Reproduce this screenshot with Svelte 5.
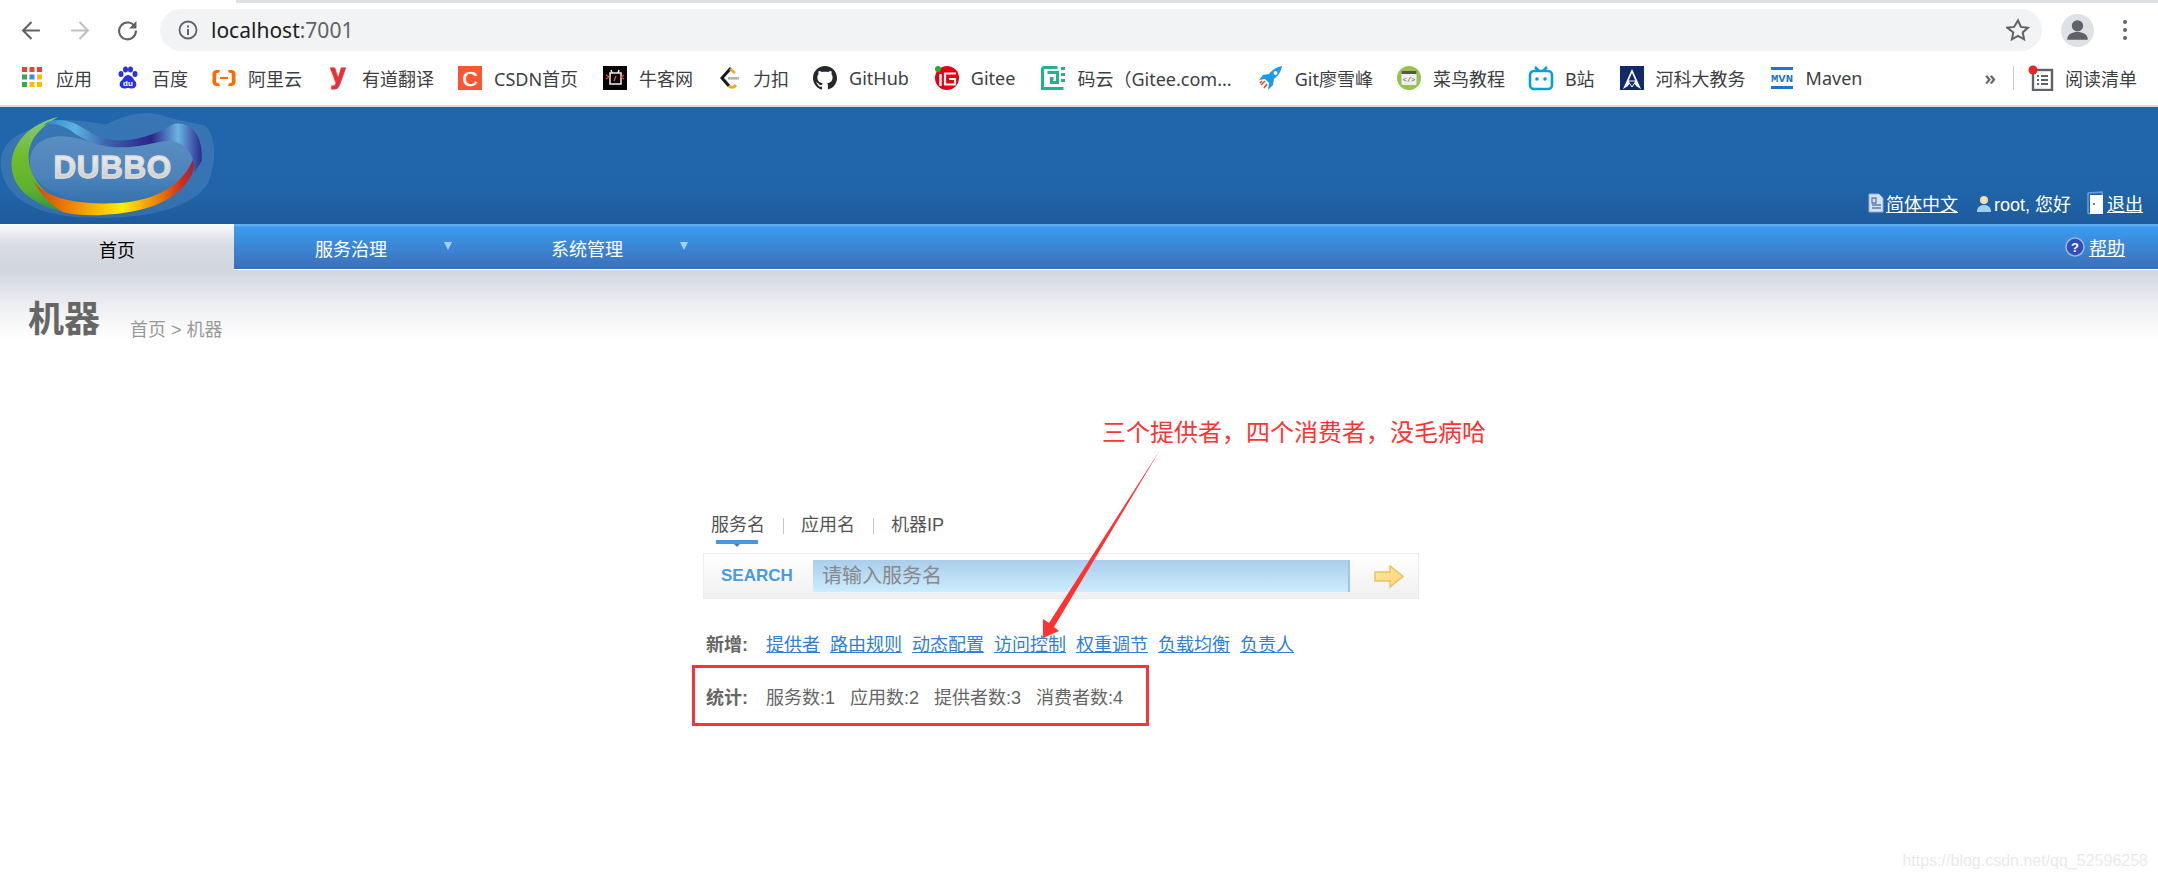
<script>
  const bookmarks = [
    { label: "应用", icon: "apps", gap: 24 },
    { label: "百度", icon: "baidu", gap: 24 },
    { label: "阿里云", icon: "ali", gap: 24 },
    { label: "有道翻译", icon: "youdao", gap: 24 },
    { label: "CSDN首页", icon: "csdn", gap: 25 },
    { label: "牛客网", icon: "nowcoder", gap: 24 },
    { label: "力扣", icon: "leetcode", gap: 24 },
    { label: "GitHub", icon: "github", gap: 26 },
    { label: "Gitee", icon: "gitee", gap: 26 },
    { label: "码云（Gitee.com...", icon: "mayun", gap: 27 },
    { label: "Git廖雪峰", icon: "rocket", gap: 24 },
    { label: "菜鸟教程", icon: "runoob", gap: 24 },
    { label: "B站", icon: "bili", gap: 25 },
    { label: "河科大教务", icon: "haust", gap: 24 },
    { label: "Maven", icon: "maven", gap: 0 },
  ];

  const icons = {
    apps: `<g fill="#ea4335"><rect x="2" y="1" width="5" height="5"/><rect x="9.500" y="1" width="5" height="5"/><rect x="17" y="1" width="5" height="5"/></g><rect x="2" y="8.500" width="5" height="5" fill="#34a853"/><rect x="9.500" y="8.500" width="5" height="5" fill="#4285f4"/><rect x="17" y="8.500" width="5" height="5" fill="#fbbc05"/><rect x="2" y="16" width="5" height="5" fill="#34a853"/><rect x="9.500" y="16" width="5" height="5" fill="#fbbc05"/><rect x="17" y="16" width="5" height="5" fill="#fbbc05"/>`,
    baidu: `<g fill="#2932e1"><ellipse cx="5" cy="8" rx="2.500" ry="3"/><ellipse cx="9.500" cy="3.500" rx="2.500" ry="3"/><ellipse cx="14.500" cy="3.500" rx="2.500" ry="3"/><ellipse cx="19" cy="8" rx="2.500" ry="3"/><path d="M12 9C8.500 9 7.500 13 5 15 2.500 17.500 3.500 22.500 8.500 22.500c1.500 0 2.500-.5 3.500-.5s2 .5 4 .5c4.500 0 5.500-5 3-7.500C17.500 13 15.500 9 12 9z"/></g><text x="12" y="20" font-size="8" font-weight="700" fill="#fff" text-anchor="middle" font-family="Liberation Sans">du</text>`,
    ali: `<path d="M8 4H4.500C2.500 4 .5 5.500.5 8v8c0 2.500 2 4 4 4H8l-.8-2.400-3-.8V7.200l3-.8zM16 4h3.500c2 0 4 1.500 4 4v8c0 2.500-2 4-4 4H16l.8-2.400 3-.8V7.200l-3-.8z" fill="#ff6a00"/><rect x="8" y="11" width="8" height="2" fill="#ff6a00"/>`,
    youdao: `<text x="12" y="17" font-size="27" font-weight="700" fill="#e8303a" stroke="#e8303a" stroke-width="1.200" text-anchor="middle" font-family="Liberation Sans">y</text>`,
    csdn: `<rect width="24" height="24" fill="#fc5531"/><text x="12" y="19.500" font-size="21" fill="#fff" stroke="#fff" stroke-width=".6" text-anchor="middle" font-family="Liberation Sans">C</text>`,
    nowcoder: `<rect width="24" height="24" fill="#050505"/><rect x="7" y="7" width="11" height="11" fill="none" stroke="#eee" stroke-width="1.500"/><path d="M8 4l1 3M16 4l-1 3" stroke="#eee" stroke-width="1.500"/><path d="M3 9l3 2-3 2M21 9l-3 2 3 2M11 15l2-5" stroke="#e8562a" stroke-width="1.300" fill="none"/>`,
    leetcode: `<path d="M14 2L5 12l7 8" fill="none" stroke="#1a1a1a" stroke-width="3"/><path d="M13 3l5 4" stroke="#f5a623" stroke-width="2.600"/><path d="M12 20c2.500 2 5 1.500 7-1" fill="none" stroke="#f5a623" stroke-width="3"/><rect x="11" y="11" width="11" height="2.600" fill="#b3b3b3"/>`,
    github: `<path fill="#24292e" d="M12 0C5.400 0 0 5.400 0 12c0 5.300 3.400 9.800 8.200 11.400.6.100.8-.3.800-.6v-2.100c-3.300.7-4-1.600-4-1.600-.5-1.400-1.300-1.800-1.300-1.800-1.100-.7.100-.7.100-.7 1.200.1 1.800 1.200 1.800 1.200 1.100 1.800 2.800 1.300 3.500 1 .1-.8.400-1.300.8-1.600-2.700-.3-5.500-1.300-5.500-5.900 0-1.300.5-2.400 1.200-3.200-.1-.3-.5-1.500.1-3.200 0 0 1-.3 3.300 1.200 1-.3 2-.4 3-.4s2 .1 3 .4c2.300-1.500 3.300-1.200 3.300-1.200.7 1.700.2 2.900.1 3.200.8.800 1.200 1.900 1.200 3.200 0 4.600-2.800 5.600-5.500 5.900.4.400.8 1.100.8 2.200v3.300c0 .3.200.7.800.6C20.600 21.800 24 17.300 24 12c0-6.600-5.400-12-12-12z"/>`,
    gitee: `<circle cx="12" cy="12" r="12" fill="#e60012"/><path d="M5.500 8v12" stroke="#fff" stroke-width="2.400"/><path d="M21 7.500H10v11h10V13h-6" fill="none" stroke="#fff" stroke-width="2.200"/><circle cx="3" cy="3" r="3" fill="#22ac38"/>`,
    mayun: `<path d="M1.500 1.500h15M1.500 1.500v21h21M6.500 6.500h10v10h-6v-4h2" fill="none" stroke="#1db58f" stroke-width="3"/><rect x="20" y="1" width="4" height="3" fill="#1db58f"/><rect x="20" y="7" width="4" height="3" fill="#1db58f"/><rect x="20" y="13" width="4" height="3" fill="#1db58f"/>`,
    rocket: `<path fill="#1d9be8" d="M23 0c-6 1-10 4-13 8l-6 1-4 5 6-1 4 4-1 7 5-5 1-6c4-3 7-7 8-13z"/><circle cx="16.500" cy="7" r="2" fill="#fff"/><path d="M6 15l-4 4M8 18l-3 4M3 15l-2 2" stroke="#ee4b2b" stroke-width="1.600"/>`,
    runoob: `<circle cx="12" cy="12" r="12" fill="#96c24e"/><rect x="4.500" y="5" width="15" height="14" rx="1" fill="#eee"/><rect x="4.500" y="5" width="15" height="3" fill="#555"/><text x="12" y="16" font-size="7" fill="#555" text-anchor="middle" font-family="Liberation Mono">&lt;/&gt;</text>`,
    bili: `<rect x="1" y="5" width="22" height="18" rx="4" fill="none" stroke="#00a1d6" stroke-width="2.600"/><path d="M6 1l4 4M18 1l-4 4" stroke="#00a1d6" stroke-width="2.600"/><circle cx="8" cy="13" r="1.800" fill="#00a1d6"/><circle cx="16" cy="13" r="1.800" fill="#00a1d6"/>`,
    haust: `<rect width="24" height="24" fill="#12296b"/><path d="M12 3l9 20-5-3-4-7-4 7-5 3z" fill="#fff"/><path d="M12 7l3.500 8h-7z" fill="#12296b"/><path d="M8 15h8l-4 6z" fill="#12296b" stroke="#fff"/>`,
    maven: `<rect x="1" y="1" width="22" height="3" fill="#1976d2"/><rect x="1" y="20" width="22" height="3" fill="#1976d2"/><text x="12" y="16" font-size="11" font-weight="700" fill="#1976d2" text-anchor="middle" textLength="22" lengthAdjust="spacingAndGlyphs" font-family="Liberation Mono">MVN</text>`,
  };

  const tabs = ["服务名", "应用名", "机器IP"];
  const addLinks = ["提供者", "路由规则", "动态配置", "访问控制", "权重调节", "负载均衡", "负责人"];
  const stats = ["服务数:1", "应用数:2", "提供者数:3", "消费者数:4"];
</script>

<div class="chrome">
  <div class="tabstrip"><div class="tab"></div></div>

  <div class="toolbar">
    <svg class="nav-btn" viewBox="0 0 20 20"><path d="M18 10H3M10 2l-8 8 8 8" fill="none" stroke="#5f6368" stroke-width="2"/></svg>
    <svg class="nav-btn" viewBox="0 0 20 20"><path d="M2 10h15M10 2l8 8-8 8" fill="none" stroke="#bdc1c6" stroke-width="2"/></svg>
    <svg class="nav-btn" viewBox="0 0 20 20"><path d="M17 6.500A8 8 0 1 0 18 10" fill="none" stroke="#5f6368" stroke-width="2"/><path d="M18.500 1v7h-7z" fill="#5f6368"/></svg>

    <div class="omnibox">
      <svg class="info" viewBox="0 0 20 20"><circle cx="10" cy="10" r="8.500" fill="none" stroke="#5f6368" stroke-width="1.800"/><rect x="9" y="9" width="2" height="6" fill="#5f6368"/><rect x="9" y="5.500" width="2" height="2" fill="#5f6368"/></svg>
      <span class="url">localhost<span class="port">:7001</span></span>
      <svg class="star" viewBox="0 0 24 24"><path d="M12 2.500l2.900 6.400 7 .8-5.200 4.700 1.400 6.900-6.100-3.500-6.100 3.500 1.400-6.900L1.100 9.700l7-.8z" fill="none" stroke="#5f6368" stroke-width="2"/></svg>
    </div>

    <div class="avatar">
      <svg viewBox="0 0 32 32"><circle cx="16" cy="11.500" r="5.500" fill="#5f6368"/><path d="M6 25c0-5.500 5-7.500 10-7.500s10 2 10 7.500z" fill="#5f6368"/></svg>
    </div>
    <div class="dots"><i></i><i></i><i></i></div>
  </div>

  <div class="bookmarks">
    {#each bookmarks as b}
      <div class="bookmark" style="margin-right:{b.gap}px">
        <svg class="bm-icon" viewBox="0 0 24 24">{@html icons[b.icon]}</svg>
        <span>{b.label}</span>
      </div>
    {/each}
    <span class="more">»</span>
    <span class="bm-divider"></span>
    <div class="reader">
      <svg class="reader-icon" viewBox="0 0 26 26"><rect x="5" y="5" width="19" height="20" fill="none" stroke="#5f6368" stroke-width="2.400"/><path d="M9 11h2M13 11h7M9 15h2M13 15h7M9 19h2M13 19h7" stroke="#5f6368" stroke-width="2"/><circle cx="5" cy="5" r="4.500" fill="#e02828"/></svg>
      <span>阅读清单</span>
    </div>
  </div>
</div>

<header class="brand">
  <svg class="logo" viewBox="0 0 720 360">
    <defs>
      <linearGradient id="g-green" x1="0" y1="0" x2="0" y2="1">
        <stop offset="0" stop-color="#86c97c"/><stop offset=".4" stop-color="#72bc2c"/><stop offset=".75" stop-color="#5fb02e"/><stop offset="1" stop-color="#1f9348"/>
      </linearGradient>
      <linearGradient id="g-rainbow" x1="0" y1="0" x2="1" y2="0">
        <stop offset="0" stop-color="#d8410f"/><stop offset=".25" stop-color="#ef8a05"/><stop offset=".55" stop-color="#ffee00"/><stop offset=".75" stop-color="#ef8a05"/><stop offset=".92" stop-color="#d42a1a"/><stop offset="1" stop-color="#8a2a50"/>
      </linearGradient>
      <linearGradient id="g-ribbon" x1="0" y1="0" x2="1" y2="0">
        <stop offset="0" stop-color="#2d84c4"/><stop offset=".2" stop-color="#5ab4e2"/><stop offset=".4" stop-color="#3d62ac"/><stop offset=".68" stop-color="#2c2488"/><stop offset=".85" stop-color="#6ab4e4"/><stop offset="1" stop-color="#2a2a8c"/>
      </linearGradient>
      <linearGradient id="g-inner" x1="0" y1="0" x2="0" y2="1">
        <stop offset="0" stop-color="#fff" stop-opacity=".18"/><stop offset=".55" stop-color="#fff" stop-opacity=".12"/><stop offset="1" stop-color="#fff" stop-opacity="0"/>
      </linearGradient>
      <linearGradient id="g-word" x1="0" y1="0" x2="0" y2="1">
        <stop offset="0" stop-color="#f4f4f4"/><stop offset="1" stop-color="#c4c4c4"/>
      </linearGradient>
    </defs>
    <path d="M2 170C10 100 70 85 130 60c60-25 130-5 190 0 50-25 110-45 170-25 45 15 90 20 125 30 35 30 35 110 10 170-50 90-230 115-380 105C130 335 0 290 2 170z" fill="#fff" opacity=".1"/>
    <path d="M90 170C95 100 170 85 240 105c60 20 150 25 240 5 80-15 110 25 100 75-15 60-110 105-230 112-130 5-265-40-260-127z" fill="url(#g-inner)"/>
    <path d="M175 38C90 58 30 120 35 190c5 80 95 130 205 142-50-22-130-72-150-142-15-60 10-110 85-152z" fill="url(#g-green)"/>
    <path d="M100 230c40 60 150 70 240 68 100-3 210-38 245-148 10 70-55 140-155 165-80 20-180 25-240 10-40-25-70-55-90-95z" fill="url(#g-rainbow)"/>
    <path d="M130 62c40-27 90-12 140 23 60 40 160 30 250-25 50-10 90 30 85 110l-22 38c5-50-25-95-75-98-50 5-90 20-140 20-60 0-110-15-155-50-25-15-50-25-83-18z" fill="url(#g-ribbon)"/>
    <text class="logo-word" x="338" y="222" text-anchor="middle" fill="url(#g-word)" stroke="#dcdcdc" stroke-width="4">DUBBO</text>
  </svg>

  <div class="user-links">
    <span class="u-item">
      <svg class="u-icon" viewBox="0 0 16 20"><path d="M1 1h10l4 4v14H1z" fill="#d4e2f2" stroke="#8fb0d4"/><path d="M4 5h4v5H4zM4 12h9M4 15h9" fill="none" stroke="#5b7ea8" stroke-width="1.300"/></svg>
      <a href="#top">简体中文</a>
    </span>
    <span class="u-item">
      <svg class="u-icon" viewBox="0 0 16 20"><circle cx="8" cy="7" r="4" fill="#f2dfae"/><path d="M1 19c0-5 3-7 7-7s7 2 7 7z" fill="#9cd0ee"/></svg>
      <span>root, 您好</span>
    </span>
    <span class="u-item exit">
      <svg class="u-exit" viewBox="0 0 18 24"><path d="M1 2l14-1v4" fill="none" stroke="#6ca0dc" stroke-width="1.500"/><path d="M3 4h13v19H3z" fill="#fff"/><path d="M1 2v20l2 1" fill="none" stroke="#6ca0dc" stroke-width="1.500"/><circle cx="7" cy="13" r="1" fill="#2a63a8"/></svg>
      <a href="#top">退出</a>
    </span>
  </div>
</header>

<nav class="mainnav">
  <div class="nav-home">首页</div>
  <div class="nav-menu">服务治理<i class="caret"></i></div>
  <div class="nav-menu">系统管理<i class="caret"></i></div>
  <div class="nav-help">
    <svg viewBox="0 0 20 20" class="help-icon"><circle cx="10" cy="10" r="9" fill="#2f50b8" stroke="#9fb4d8" stroke-width="1.500"/><text x="10" y="15" font-size="13" font-weight="700" fill="#fff" text-anchor="middle" font-family="Liberation Sans">?</text></svg>
    <a href="#top">帮助</a>
  </div>
</nav>

<section class="crumbs">
  <h1>机器</h1>
  <span>首页 &gt; 机器</span>
</section>

<main class="search-area">
  <div class="tabs">
    {#each tabs as t, i}
      {#if i > 0}<span class="tab-sep"></span>{/if}
      <span class="search-tab" class:current={i === 0}>{t}</span>
    {/each}
  </div>

  <div class="search-box">
    <span class="search-label">SEARCH</span>
    <div class="search-input">请输入服务名</div>
    <svg class="go" viewBox="0 0 30 23">
      <defs>
        <linearGradient id="g-go" x1="0" y1="0" x2="1" y2="1">
          <stop offset="0" stop-color="#fdeb9c"/><stop offset="1" stop-color="#fccf78"/>
        </linearGradient>
      </defs>
      <path d="M1 7h15V1l13 10.500L16 22v-6H1z" fill="url(#g-go)" stroke="#e6c46a" stroke-width="1.500"/>
    </svg>
  </div>

  <div class="add-row">
    <b>新增:</b>
    {#each addLinks as l}<a href="#top">{l}</a>{/each}
  </div>

  <div class="stats-row">
    <b>统计:</b>
    {#each stats as s}<span>{s}</span>{/each}
  </div>
</main>

<!-- red screenshot annotation on top of the page -->
<div class="note">三个提供者，四个消费者，没毛病哈</div>
<svg class="note-arrow" viewBox="0 0 130 200">
  <path d="M124 3L18 180l5 4-16 7V172l6 4z" fill="#ff3333"/>
</svg>
<div class="watermark">https://blog.csdn.net/qq_52596258</div>

<style>
  :global(body) {
    margin: 0;
    background: #fff;
  }

  .chrome {
    font-family: "Noto Sans", "Noto Sans CJK SC", sans-serif;
    color: #3c4043;
  }

  .tabstrip {
    height: 3px;
    background: #dee1e6;
  }

  .tab {
    width: 236px;
    height: 3px;
    background: #fff;
  }

  .toolbar {
    height: 52px;
    display: flex;
    align-items: center;
    padding-left: 21px;
    padding-top: 2px;
    box-sizing: border-box;
    background: #fff;
  }

  .nav-btn {
    width: 21px;
    height: 21px;
    margin-right: 27px;
  }

  .omnibox {
    margin-left: -5px;
    width: 1882px;
    height: 42px;
    border-radius: 21px;
    background: #f1f3f4;
    display: flex;
    align-items: center;
    padding-left: 18px;
    padding-right: 12px;
    box-sizing: border-box;
  }

  .info {
    width: 20px;
    height: 20px;
    margin-right: 13px;
  }

  .url {
    font-size: 21px;
    color: #202124;
    flex: 1;
  }

  .port {
    color: #5f6368;
  }

  .star {
    width: 24px;
    height: 24px;
  }

  .avatar {
    width: 33px;
    height: 33px;
    margin-left: 19px;
    border-radius: 50%;
    background: #dee1e6;
    overflow: hidden;
  }

  .avatar svg {
    display: block;
    width: 33px;
    height: 33px;
  }

  .dots {
    margin-left: 29px;
    display: flex;
    flex-direction: column;
    gap: 4px;
  }

  .dots i {
    width: 4px;
    height: 4px;
    border-radius: 50%;
    background: #5f6368;
  }

  .bookmarks {
    height: 46px;
    padding-bottom: 4px;
    display: flex;
    align-items: center;
    padding-left: 20px;
    font-size: 18px;
    white-space: nowrap;
    border-bottom: 2px solid #d8dadd;
  }

  .bookmark {
    display: flex;
    align-items: center;
    gap: 12px;
  }

  .bm-icon {
    width: 24px;
    height: 24px;
    flex: none;
    overflow: visible;
  }

  .more {
    margin-left: auto;
    margin-bottom: 2px;
    font-size: 20px;
    font-weight: 600;
    color: #5f6368;
  }

  .bm-divider {
    width: 1px;
    height: 24px;
    margin: 0 14px 0 17px;
    background: #c8cacc;
  }

  .reader {
    display: flex;
    align-items: center;
    gap: 11px;
    margin-right: 21px;
  }

  .reader-icon {
    width: 26px;
    height: 26px;
  }

  .brand {
    height: 117px;
    display: flex;
    justify-content: space-between;
    align-items: flex-end;
    background: linear-gradient(#2166ac, #2065aa 70%, #1e5a9c);
    font-family: "Liberation Sans", "Noto Sans CJK SC", sans-serif;
  }

  .logo {
    width: 240px;
    height: 120px;
    align-self: flex-start;
    margin-top: -3px;
  }

  .logo-word {
    font-family: "Liberation Sans", sans-serif;
    font-weight: 700;
    font-size: 94px;
    letter-spacing: 2px;
  }

  .user-links {
    display: flex;
    align-items: center;
    padding-right: 15px;
    padding-bottom: 8px;
    gap: 18px;
    font-size: 18px;
    color: #fff;
  }

  .u-item {
    display: flex;
    align-items: center;
    gap: 2px;
  }

  .u-item.exit {
    margin-left: -2px;
  }

  .u-icon {
    width: 16px;
    height: 20px;
  }

  .u-exit {
    width: 18px;
    height: 24px;
  }

  a {
    color: inherit;
    text-decoration: underline;
  }

  .mainnav {
    height: 46px;
    display: flex;
    align-items: stretch;
    font-family: "Liberation Sans", "Noto Sans CJK SC", sans-serif;
    font-size: 18px;
    color: #fff;
    background: linear-gradient(#5cabf3 0, #5cabf3 2px, #3a9cf0 3px, #3d6fb9 44px);
    border-bottom: 1px solid #fff;
    box-sizing: border-box;
  }

  .nav-home {
    width: 234px;
    margin-bottom: -1px;
    padding-top: 3px;
    box-sizing: border-box;
    display: flex;
    align-items: center;
    justify-content: center;
    color: #000;
    background: linear-gradient(#fbfcfc, #dfe2e7 35%, #d8dbe1 50%, #d0d5de);
  }

  .nav-menu {
    width: 236px;
    padding-left: 81px;
    padding-top: 3px;
    box-sizing: border-box;
    display: flex;
    align-items: center;
    gap: 57px;
  }

  .caret {
    width: 0;
    height: 0;
    margin-bottom: 5px;
    border-left: 4.500px solid transparent;
    border-right: 4.500px solid transparent;
    border-top: 8px solid #a9cff5;
  }

  .nav-help {
    margin-left: auto;
    padding-right: 33px;
    display: flex;
    align-items: center;
    gap: 4px;
  }

  .help-icon {
    width: 20px;
    height: 20px;
  }

  .crumbs {
    height: 75px;
    padding-left: 28px;
    box-sizing: border-box;
    display: flex;
    align-items: flex-end;
    gap: 30px;
    padding-bottom: 3px;
    background: linear-gradient(#d0d5de, #eff0f3 50%, #fff 92%);
    font-family: "Liberation Sans", "Noto Sans CJK SC", sans-serif;
  }

  .crumbs h1 {
    margin: 0;
    font-size: 36px;
    line-height: 44px;
    font-weight: 700;
    color: #666;
  }

  .crumbs span {
    font-size: 18px;
    line-height: 24px;
    color: #999;
  }

  .search-area {
    margin-left: 692px;
    width: 727px;
    padding-top: 168px;
    font-family: "Liberation Sans", "Noto Sans CJK SC", sans-serif;
    font-size: 18px;
    color: #666;
  }

  .tabs {
    height: 40px;
    margin-left: 19px;
    display: flex;
    align-items: flex-start;
    line-height: 24px;
    color: #555;
  }

  .search-tab {
    position: relative;
  }

  .search-tab.current::after {
    content: "";
    position: absolute;
    left: 5px;
    right: 7px;
    top: 27px;
    height: 4px;
    background: #4a97dc;
  }

  .search-tab.current::before {
    content: "";
    position: absolute;
    left: 23px;
    top: 31px;
    border-left: 3px solid transparent;
    border-right: 3px solid transparent;
    border-top: 3px solid #4a7fb0;
  }

  .tab-sep {
    width: 1px;
    height: 16px;
    margin: 5px 17.500px 0;
    background: #c4c8cc;
  }

  .search-box {
    margin-left: 11px;
    width: 716px;
    height: 46px;
    box-sizing: border-box;
    border: 1px solid #ececec;
    background: linear-gradient(#fff, #f0f0f0);
    display: flex;
    align-items: center;
    padding-left: 17px;
  }

  .search-label {
    width: 92px;
    font-size: 17px;
    font-weight: 700;
    color: #4a9be0;
    flex: none;
  }

  .search-input {
    width: 537px;
    height: 32px;
    line-height: 32px;
    box-sizing: border-box;
    padding-left: 9px;
    font-size: 20px;
    color: #888;
    background: linear-gradient(#a9cdec, #ccedfe);
    border-right: 2px solid #a0c6e2;
    flex: none;
  }

  .go {
    width: 30px;
    height: 23px;
    margin-left: 24px;
  }

  .add-row {
    margin-left: 14px;
    margin-top: 32px;
    display: flex;
    align-items: center;
    height: 24px;
    gap: 10px;
    color: #3080d8;
  }

  .add-row b {
    width: 50px;
    color: #666;
  }

  .add-row a {
    flex: none;
  }

  .stats-row {
    margin-top: 10px;
    width: 457px;
    height: 61px;
    box-sizing: border-box;
    border: 3px solid #f33;
    padding-left: 11px;
    display: flex;
    align-items: center;
    gap: 15px;
  }

  .stats-row b {
    width: 45px;
  }

  .note {
    position: absolute;
    left: 1102px;
    top: 417px;
    font-family: "Liberation Sans", "Noto Sans CJK SC", sans-serif;
    font-size: 24px;
    line-height: 32px;
    color: #f33;
    white-space: nowrap;
  }

  .note-arrow {
    position: absolute;
    left: 1036px;
    top: 447px;
    width: 130px;
    height: 200px;
  }

  .watermark {
    position: absolute;
    right: 10px;
    top: 851px;
    font-family: "Liberation Sans", sans-serif;
    font-size: 16px;
    line-height: 20px;
    color: #eaeaea;
  }
</style>
